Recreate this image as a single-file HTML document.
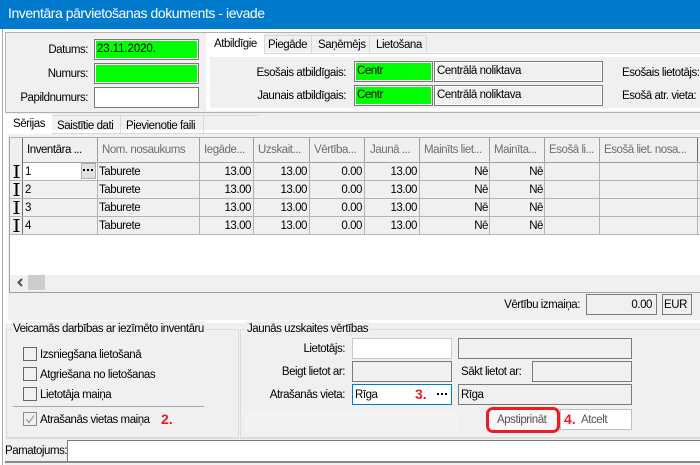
<!DOCTYPE html>
<html><head><meta charset="utf-8"><style>
html,body{margin:0;padding:0}
body{width:700px;height:465px;overflow:hidden;position:relative;background:#f0f0f0;font:11.5px "Liberation Sans",sans-serif;letter-spacing:-.45px;color:#000}
div{position:absolute;box-sizing:border-box}
.t{white-space:nowrap;line-height:16px;height:16px}
.r{text-align:right}
.b{border:1px solid #7a7a7a;background:#f0f0f0}
.g{border:1px solid #7a7a7a;background:#00ff00;box-shadow:inset 0 0 0 1px #fff}
.h{color:#6d6d6d;top:142px}
.hs{width:1px;background:#a0a0a0;top:138px;height:24px}
.vs{width:1px;background:#b4b4b4;top:162px;height:73px}
.hl{height:1px;background:#b4b4b4;left:10px;width:690px}
.c{width:14px;height:14px;border:1px solid #666;background:#f0f0f0;left:23px}
.red{color:#ed1c24;font-weight:bold;font-size:14px;letter-spacing:0}
</style></head><body>
<div style="left:0;top:0;width:700px;height:29px;background:#007acc"></div>
<div style="left:0;top:29px;width:700px;height:3px;background:#fff"></div>
<div class="t" style="left:8px;top:4px;color:#fff;font-size:14px;line-height:18px;height:18px;letter-spacing:-.45px">Inventāra pārvietošanas dokuments - ievade</div>
<div style="left:0;top:29px;width:2px;height:436px;background:#fff"></div>
<div style="left:2px;top:29px;width:1px;height:436px;background:#a8a8a8"></div>
<div style="left:3px;top:29px;width:2px;height:436px;background:#fff"></div>
<div style="left:5px;top:32px;width:695px;height:1px;background:#b0b0b0"></div>
<div style="left:5px;top:32px;width:1px;height:81px;background:#b0b0b0"></div>
<div style="left:5px;top:112px;width:695px;height:1px;background:#b0b0b0"></div>

<div class="t r" style="left:20px;width:68px;top:42px">Datums:</div>
<div class="t r" style="left:20px;width:68px;top:66px">Numurs:</div>
<div class="t r" style="left:10px;width:78px;top:90px">Papildnumurs:</div>
<div class="g" style="left:94px;top:39px;width:105px;height:21px"></div>
<div class="t" style="left:97px;top:41px;letter-spacing:-.1px">23.11.2020.</div>
<div class="g" style="left:94px;top:63px;width:105px;height:21px"></div>
<div class="b" style="left:94px;top:87px;width:105px;height:21px;background:#fff"></div>

<div style="left:206px;top:52px;width:494px;height:59px;background:#fff"></div>
<div style="left:210px;top:57px;width:490px;height:51px;background:#f0f0f0"></div>
<div style="left:264px;top:53px;width:436px;height:1px;background:#d9d9d9"></div>
<div style="left:206px;top:33px;width:58px;height:22px;background:#fff"></div>
<div class="t" style="left:214px;top:36px">Atbildīgie</div>
<div style="left:264px;top:35px;width:48px;height:19px;border:1px solid #d9d9d9;border-bottom:0"></div>
<div class="t" style="left:268px;top:37px">Piegāde</div>
<div style="left:312px;top:35px;width:58px;height:19px;border:1px solid #d9d9d9;border-width:1px 1px 0 0"></div>
<div class="t" style="left:318px;top:37px">Saņēmējs</div>
<div style="left:370px;top:35px;width:57px;height:19px;border:1px solid #d9d9d9;border-width:1px 1px 0 0"></div>
<div class="t" style="left:376px;top:37px">Lietošana</div>

<div class="t r" style="left:230px;width:116px;top:65px">Esošais atbildīgais:</div>
<div class="t r" style="left:230px;width:116px;top:88px">Jaunais atbildīgais:</div>
<div class="g" style="left:354px;top:61px;width:79px;height:21px"></div>
<div class="g" style="left:354px;top:85px;width:79px;height:21px"></div>
<div class="t" style="left:357px;top:63px">Centr</div>
<div class="t" style="left:357px;top:87px">Centr</div>
<div class="b" style="left:434px;top:61px;width:169px;height:21px;box-shadow:inset 0 0 0 1px #fff"></div>
<div class="b" style="left:434px;top:85px;width:169px;height:21px;box-shadow:inset 0 0 0 1px #fff"></div>
<div class="t" style="left:437px;top:63px">Centrālā noliktava</div>
<div class="t" style="left:437px;top:87px">Centrālā noliktava</div>
<div class="t" style="left:622px;top:65px">Esošais lietotājs:</div>
<div class="t" style="left:622px;top:88px">Esošā atr. vieta:</div>

<div style="left:5px;top:114px;width:695px;height:210px;background:#f0f0f0"></div>
<div style="left:5px;top:130px;width:695px;height:190px;border-left:3px solid #fff;border-top:3px solid #fff"></div>
<div style="left:5px;top:114px;width:47px;height:20px;background:#fff"></div>
<div class="t" style="left:13px;top:116px">Sērijas</div>
<div style="left:53px;top:116px;width:68px;height:17px;border-right:1px solid #d9d9d9"></div>
<div class="t" style="left:57px;top:118px">Saistītie dati</div>
<div style="left:121px;top:116px;width:83px;height:17px;border-right:1px solid #d9d9d9"></div>
<div class="t" style="left:126px;top:118px">Pievienotie faili</div>
<div style="left:52px;top:115px;width:207px;height:1px;background:#d9d9d9"></div>
<div style="left:52px;top:133px;width:648px;height:1px;background:#d9d9d9"></div>

<div style="left:9px;top:137px;width:691px;height:156px;background:#fff;border:1px solid #a0a0a0;border-right:0;border-top:1px solid #b0b0b0"></div>
<div style="left:10px;top:138px;width:690px;height:97px;background:#f0f0f0"></div>
<div style="left:10px;top:162px;width:690px;height:1px;background:#a0a0a0"></div>
<div style="left:10px;top:138px;width:12px;height:97px;background:#f0f0f0"></div>
<div style="left:23px;top:163px;width:74px;height:17px;background:#fff"></div>
<div class="hs" style="left:22px;background:#707070"></div><div class="hs" style="left:97px"></div><div class="hs" style="left:199px"></div><div class="hs" style="left:253px"></div><div class="hs" style="left:309px"></div><div class="hs" style="left:364px"></div><div class="hs" style="left:419px"></div><div class="hs" style="left:489px"></div><div class="hs" style="left:544px"></div><div class="hs" style="left:599px"></div><div class="hs" style="left:697px;background:#707070"></div>
<div class="vs" style="left:22px;background:#707070"></div><div class="vs" style="left:97px"></div><div class="vs" style="left:199px"></div><div class="vs" style="left:253px"></div><div class="vs" style="left:309px"></div><div class="vs" style="left:364px"></div><div class="vs" style="left:419px"></div><div class="vs" style="left:489px"></div><div class="vs" style="left:544px"></div><div class="vs" style="left:599px"></div><div class="vs" style="left:697px"></div>
<div class="hl" style="top:180px"></div><div class="hl" style="top:198px"></div><div class="hl" style="top:216px"></div><div class="hl" style="top:234px"></div>

<div class="t" style="left:27px;top:142px">Inventāra ...</div>
<div class="t h" style="left:102px">Nom. nosaukums</div>
<div class="t h" style="left:204px">Iegāde...</div>
<div class="t h" style="left:258px">Uzskait...</div>
<div class="t h" style="left:314px">Vērtība...</div>
<div class="t h" style="left:370px">Jaunā ...</div>
<div class="t h" style="left:424px">Mainīts liet...</div>
<div class="t h" style="left:494px">Mainīta...</div>
<div class="t h" style="left:549px">Esošā li...</div>
<div class="t h" style="left:604px">Esošā liet. nosa...</div>

<div style="left:81px;top:163px;width:15px;height:16px;background:#e1e1e1;border:1px solid #adadad"></div>
<svg style="position:absolute;left:83px;top:169px" width="10" height="2" viewBox="0 0 10 2"><path d="M0 0h2v2H0zM4 0h2v2H4zM8 0h2v2H8z" fill="#000"/></svg>

<svg style="position:absolute;left:11px;top:164px" width="11" height="72" viewBox="0 0 11 72"><g fill="none" stroke="#000" stroke-width="1"><path d="M2.5 1.5h6M2.5 13.5h6"/><path d="M2.5 19.5h6M2.5 31.5h6"/><path d="M2.5 37.5h6M2.5 49.5h6"/><path d="M2.5 55.5h6M2.5 67.5h6"/></g><g fill="none" stroke="#000" stroke-width="2"><path d="M5.5 1v13M5.5 19v13M5.5 37v13M5.5 55v13"/></g></svg>

<div class="t" style="left:25px;top:164px">1</div><div class="t" style="left:25px;top:182px">2</div><div class="t" style="left:25px;top:200px">3</div><div class="t" style="left:25px;top:218px">4</div>
<div class="t" style="left:99px;top:164px">Taburete</div><div class="t" style="left:99px;top:182px">Taburete</div><div class="t" style="left:99px;top:200px">Taburete</div><div class="t" style="left:99px;top:218px">Taburete</div>

<div class="t r" style="left:200px;width:51px;top:164px">13.00</div><div class="t r" style="left:200px;width:51px;top:182px">13.00</div><div class="t r" style="left:200px;width:51px;top:200px">13.00</div><div class="t r" style="left:200px;width:51px;top:218px">13.00</div>
<div class="t r" style="left:255px;width:52px;top:164px">13.00</div><div class="t r" style="left:255px;width:52px;top:182px">13.00</div><div class="t r" style="left:255px;width:52px;top:200px">13.00</div><div class="t r" style="left:255px;width:52px;top:218px">13.00</div>
<div class="t r" style="left:310px;width:52px;top:164px">0.00</div><div class="t r" style="left:310px;width:52px;top:182px">0.00</div><div class="t r" style="left:310px;width:52px;top:200px">0.00</div><div class="t r" style="left:310px;width:52px;top:218px">0.00</div>
<div class="t r" style="left:365px;width:52px;top:164px">13.00</div><div class="t r" style="left:365px;width:52px;top:182px">13.00</div><div class="t r" style="left:365px;width:52px;top:200px">13.00</div><div class="t r" style="left:365px;width:52px;top:218px">13.00</div>
<div class="t r" style="left:440px;width:48px;top:164px">Nē</div><div class="t r" style="left:440px;width:48px;top:182px">Nē</div><div class="t r" style="left:440px;width:48px;top:200px">Nē</div><div class="t r" style="left:440px;width:48px;top:218px">Nē</div>
<div class="t r" style="left:495px;width:48px;top:164px">Nē</div><div class="t r" style="left:495px;width:48px;top:182px">Nē</div><div class="t r" style="left:495px;width:48px;top:200px">Nē</div><div class="t r" style="left:495px;width:48px;top:218px">Nē</div>

<div style="left:10px;top:275px;width:690px;height:17px;background:#f0f0f0"></div>
<div style="left:28px;top:275px;width:17px;height:15px;background:#cdcdcd"></div>
<svg style="position:absolute;left:16px;top:278px" width="8" height="9" viewBox="0 0 8 9"><path d="M6 1L2.5 4.5L6 8" fill="none" stroke="#505050" stroke-width="2"/></svg>

<div class="t r" style="left:480px;width:100px;top:297px">Vērtību izmaiņa:</div>
<div class="b" style="left:586px;top:294px;width:71px;height:21px"></div>
<div class="t r" style="left:590px;width:62px;top:297px">0.00</div>
<div class="b" style="left:662px;top:294px;width:30px;height:21px"></div>
<div class="t" style="left:664px;top:297px">EUR</div>

<div style="left:5px;top:320px;width:695px;height:3px;background:#fff"></div>
<div style="left:6px;top:329px;width:233px;height:110px;border:1px solid #dcdcdc;border-bottom:2px solid #dcdcdc"></div>
<div style="left:240px;top:329px;width:460px;height:110px;border:1px solid #dcdcdc;border-right:0;border-bottom:2px solid #dcdcdc"></div>
<div style="left:245px;top:412px;width:213px;height:20px;background:#f3f3f3"></div>
<div class="t" style="left:12px;top:321px;background:#f0f0f0;padding:0 1px">Veicamās darbības ar iezīmēto inventāru</div>
<div class="t" style="left:246px;top:321px;background:#f0f0f0;padding:0 1px">Jaunās uzskaites vērtības</div>

<div class="c" style="top:347px"></div><div class="t" style="left:40px;top:347px">Izsniegšana lietošanā</div>
<div class="c" style="top:367px"></div><div class="t" style="left:40px;top:367px">Atgriešana no lietošanas</div>
<div class="c" style="top:387px"></div><div class="t" style="left:40px;top:387px">Lietotāja maiņa</div>
<div style="left:13px;top:406px;width:191px;height:1px;background:#a8a8a8"></div>
<div class="c" style="top:412px;border-color:#8a8a8a"></div>
<svg style="position:absolute;left:23px;top:412px" width="14" height="14" viewBox="0 0 14 14"><path d="M3.5 7.5L6 10.5L11 3.5" fill="none" stroke="#8a8a8a" stroke-width="1"/></svg>
<div class="t" style="left:40px;top:412px">Atrašanās vietas maiņa</div>
<div class="t red" style="left:161px;top:411px">2.</div>

<div class="t r" style="left:260px;width:85px;top:341px">Lietotājs:</div>
<div class="t r" style="left:260px;width:85px;top:364px">Beigt lietot ar:</div>
<div class="t r" style="left:250px;width:95px;top:387px">Atrašanās vieta:</div>
<div style="left:352px;top:338px;width:100px;height:21px;background:#fff;border:1px solid #c8c8c8"></div>
<div class="b" style="left:352px;top:361px;width:100px;height:21px"></div>
<div style="left:352px;top:384px;width:100px;height:21px;background:#fff;border:1px solid #0078d7"></div>
<div class="t" style="left:355px;top:387px">Rīga</div>
<div class="t red" style="left:415px;top:386px">3.</div>
<svg style="position:absolute;left:437px;top:393px" width="10" height="2" viewBox="0 0 10 2"><path d="M0 0h2v2H0zM4 0h2v2H4zM8 0h2v2H8z" fill="#000"/></svg>
<div class="b" style="left:458px;top:338px;width:174px;height:21px"></div>
<div class="t" style="left:461px;top:364px">Sākt lietot ar:</div>
<div class="b" style="left:532px;top:361px;width:100px;height:21px"></div>
<div class="b" style="left:458px;top:384px;width:174px;height:21px"></div>
<div class="t" style="left:461px;top:387px">Rīga</div>

<div style="left:486px;top:407px;width:74px;height:26px;border:3px solid #ed1c24;border-radius:7px;background:#f7f7f7"></div>
<div class="t" style="left:497px;top:412px;color:#555">Apstiprināt</div>
<div style="left:560px;top:409px;width:72px;height:21px;background:#fff;border:1px solid #c0c0c0"></div>
<div class="t red" style="left:564px;top:411px">4.</div>
<div class="t" style="left:581px;top:412px;color:#555">Atcelt</div>

<div class="t" style="left:5px;top:443px">Pamatojums:</div>
<div style="left:67px;top:440px;width:633px;height:22px;background:#fff;border:1px solid #7a7a7a;border-right:0;border-bottom:0"></div>
<div style="left:5px;top:461px;width:695px;height:2px;background:#8a8a8a"></div>
</body></html>
